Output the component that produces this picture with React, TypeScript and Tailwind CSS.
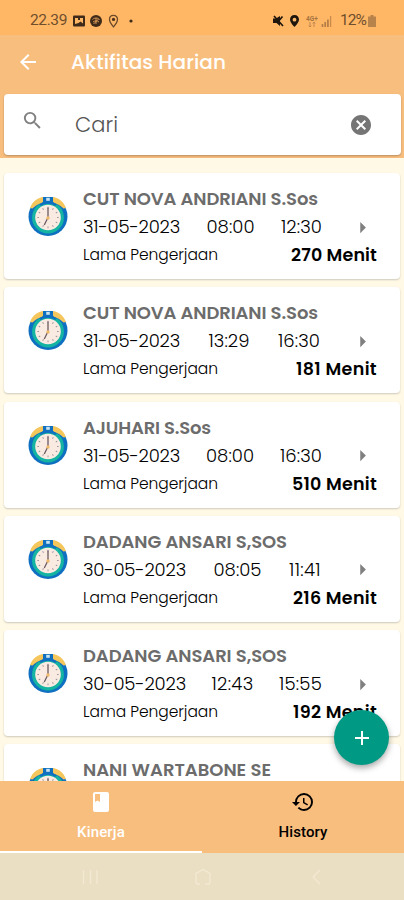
import { useState } from "react"
import {
  MdAdd,
  MdArrowBack,
  MdArrowRight,
  MdBook,
  MdCancel,
  MdHistory,
  MdSearch
} from "react-icons/md"

interface Session {
  date: string
  dateWidth: number
  start: string
  startWidth: number
  end: string
  endWidth: number
  rowWidth: number
  minutes: number
  totalWidth: number
}

interface Activity {
  id: number
  name: string
  nameWidth: number
  session?: Session
}

const activities: Activity[] = [
  {
    id: 1,
    name: "CUT NOVA ANDRIANI S.Sos",
    nameWidth: 235,
    session: { date: "31-05-2023", dateWidth: 97, start: "08:00", startWidth: 48, end: "12:30", endWidth: 41, rowWidth: 239, minutes: 270, totalWidth: 86 }
  },
  {
    id: 2,
    name: "CUT NOVA ANDRIANI S.Sos",
    nameWidth: 235,
    session: { date: "31-05-2023", dateWidth: 97, start: "13:29", startWidth: 41, end: "16:30", endWidth: 42, rowWidth: 237, minutes: 181, totalWidth: 81 }
  },
  {
    id: 3,
    name: "AJUHARI S.Sos",
    nameWidth: 128,
    session: { date: "31-05-2023", dateWidth: 97, start: "08:00", startWidth: 48, end: "16:30", endWidth: 42, rowWidth: 239, minutes: 510, totalWidth: 85 }
  },
  {
    id: 4,
    name: "DADANG ANSARI S,SOS",
    nameWidth: 204,
    session: { date: "30-05-2023", dateWidth: 103, start: "08:05", startWidth: 48, end: "11:41", endWidth: 32, rowWidth: 238, minutes: 216, totalWidth: 84 }
  },
  {
    id: 5,
    name: "DADANG ANSARI S,SOS",
    nameWidth: 204,
    session: { date: "30-05-2023", dateWidth: 103, start: "12:43", startWidth: 42, end: "15:55", endWidth: 43, rowWidth: 239, minutes: 192, totalWidth: 84 }
  },
  { id: 6, name: "NANI WARTABONE SE", nameWidth: 188 }
]

interface FitProps {
  text: string
  width: number
  className?: string
}

// Spreads the letters so that the text fills a fixed width
function Fit({ text, width, className }: FitProps) {
  const fit = (el: HTMLSpanElement | null) => {
    if (!el) return
    el.style.letterSpacing = "0px"
    const natural = el.getBoundingClientRect().width
    const step = (width - natural) / text.length
    el.style.letterSpacing = `${step}px`
  }

  return (
    <span ref={fit} className={`inline-block whitespace-nowrap ${className ?? ""}`}>
      {text}
    </span>
  )
}

function ClockIcon() {
  const ticks = [0, 30, 60, 90, 120, 150, 180, 210, 240, 270, 300, 330]
  return (
    <svg viewBox="0 0 40 40" className="h-10 w-10">
      <circle cx="20" cy="20.500" r="19.500" fill="#0f6fc0" />
      <circle cx="20" cy="21.500" r="16" fill="#14b3a2" />
      <path d="M2 12C4.500 5.500 9.500 1.500 16 1l-1 5.500C11 7.500 7.500 9.500 4.500 12.500zM38 12C35.500 5.500 30.500 1.500 24 1l1 5.500c4 1 7.500 3 10.500 6z" fill="#f5c65c" />
      <path d="M15 1h10v5l4 2.500-2 1.500C25 8.500 22.500 8 20 8s-5 .5-7 2l-2-1.500L15 6z" fill="#0f6fc0" />
      <rect x="18.200" y="1.800" width="3.600" height="3" fill="#c8e3ee" />
      <circle cx="20" cy="21.500" r="12.800" fill="#f9ebe2" />
      {ticks.map((angle) => (
        <path
          key={angle}
          d="M20 10.800v1.700"
          stroke="#9a9098"
          strokeWidth="0.900"
          transform={`rotate(${angle} 20 21.500)`}
        />
      ))}
      <path d="M20 21.500V12M20 21.500l-3.500 7" stroke="#6b5a62" strokeWidth="1.300" strokeLinecap="round" />
      <circle cx="20" cy="22" r="1.700" fill="#f3b96a" />
    </svg>
  )
}

function StatusBar() {
  return (
    <div className="flex h-[35px] shrink-0 items-center bg-[#ffb766] pt-[7px] pr-[28px] pl-[30px] font-['Roboto',sans-serif] text-[#6f4e2c]">
      <Fit text="22.39" width={37} className="text-[15.5px]" />
      <svg viewBox="0 0 62 14" className="ml-[5px] h-[14px] w-[62px]">
        <rect x="1" y="1.500" width="12" height="11" rx="1" fill="#3f2b19" />
        <path d="M3 4h3v2h2V4h3v5.500L8.500 7.500 6.500 9 3 10z" fill="#ffb766" />
        <circle cx="24" cy="7" r="6" fill="#3f2b19" />
        <path d="M20.500 5.500c2-2 5-2 7 0M21 8c2-1.500 4-1.500 6 0M24 4v6M21.500 10l5-5" fill="none" stroke="#e3a05b" strokeWidth="0.900" />
        <path d="M41.500 1.300c-2.400 0-4 1.700-4 4 0 3 4 7.600 4 7.600s4-4.600 4-7.600c0-2.300-1.600-4-4-4z" fill="none" stroke="#6b492a" strokeWidth="1.300" />
        <circle cx="41.500" cy="5.400" r="1.600" fill="#4b321c" />
        <circle cx="59" cy="7" r="1.600" fill="#3f2b19" />
      </svg>
      <div className="ml-auto flex items-center">
        <svg viewBox="0 0 61 14" className="h-[14px] w-[61px]">
          <path d="M0 4.500h3L7 2v10L3.500 9H0z" fill="#1f160d" />
          <path d="M1 2l9 10M6.500 6l3-3.500" stroke="#1f160d" strokeWidth="1.700" />
          <path d="M21.500 1c-2.700 0-4.500 2-4.500 4.500 0 3 4.500 7.500 4.500 7.500S26 8.500 26 5.500C26 3 24.200 1 21.500 1zm0 2.800a1.900 1.900 0 110 3.800 1.900 1.900 0 010-3.800z" fill="#1f160d" />
          <text x="33" y="6.500" fontSize="6.500" fontWeight="bold" fill="#a6743f">4G+</text>
          <path d="M37 13V8m-1.300 3.500L37 13l1.300-1.500M41 8v5m-1.300-3.500L41 8l1.300 1.500" stroke="#b9854c" strokeWidth="0.900" fill="none" />
          <path d="M49.500 10v3M52.200 8v5M54.900 5.500V13" stroke="#b37d45" strokeWidth="1.700" />
          <path d="M57.600 2v11" stroke="#c88b4c" strokeWidth="1.300" />
        </svg>
        <Fit text="12%" width={26} className="ml-[6px] text-[15.5px]" />
        <svg viewBox="0 0 8 12" className="ml-[2px] h-[12px] w-[8px]">
          <path d="M2.500 0h3v1.500H8V12H0V1.500h2.500z" fill="#b8834a" />
        </svg>
      </div>
    </div>
  )
}

function ActivityCard({ name, nameWidth, session }: Activity) {
  return (
    <div className="flex h-[106px] shrink-0 rounded-[4px] bg-white pt-[12px] pl-[24px] shadow-[0_1px_2px_rgba(0,0,0,0.2)]">
      <div className="mt-[11px] h-10 w-10 shrink-0">
        <ClockIcon />
      </div>
      <div className="ml-[15px] w-[294px] leading-7">
        <div className="h-7 text-[18px] font-semibold text-[#6c6c6c]">
          <Fit text={name} width={nameWidth} />
        </div>
        {session && (
          <>
            <div className="flex h-7 items-center text-[18px] font-light text-black">
              <div className="w-[239px]">
                <div className="flex justify-between" style={{ width: session.rowWidth }}>
                  <Fit text={session.date} width={session.dateWidth} />
                  <Fit text={session.start} width={session.startWidth} />
                  <Fit text={session.end} width={session.endWidth} />
                </div>
              </div>
              <MdArrowRight className="ml-[27px] h-[27px] w-[27px] text-[#808080]" />
            </div>
            <div className="flex h-7 items-center justify-between text-black">
              <Fit text="Lama Pengerjaan" width={135} className="text-[15.5px] font-light" />
              <Fit text={`${session.minutes} Menit`} width={session.totalWidth} className="text-[17.5px] font-semibold" />
            </div>
          </>
        )}
      </div>
    </div>
  )
}

export default function App() {
  const [tab, setTab] = useState("kinerja")

  return (
    <div className="relative flex h-[900px] w-[404px] flex-col overflow-hidden bg-[#fff9e6] font-['Poppins','Inter',sans-serif]">
      <StatusBar />

      <header className="h-[123px] shrink-0 bg-[#f8be7e] px-1">
        <div className="flex h-[54px] items-center pl-[12px] text-white">
          <MdArrowBack className="h-[24px] w-[24px]" />
          <Fit text="Aktifitas Harian" width={155} className="ml-[31px] text-[20px] font-medium" />
        </div>
        <div className="mt-[5px] flex h-[61px] w-[397px] items-center rounded-[4px] bg-white pr-[28px] pl-[17px] shadow-[0_1px_2px_rgba(0,0,0,0.25)]">
          <MdSearch className="-mt-[8px] h-[23px] w-[23px] text-[#808080]" />
          <Fit text="Cari" width={43} className="ml-[31px] text-[21px] font-light text-[#555]" />
          <MdCancel className="ml-auto h-[24px] w-[24px] text-[#757575]" />
        </div>
      </header>

      <main className="flex min-h-0 flex-1 flex-col gap-[8.2px] overflow-hidden px-1 pt-[15.3px]">
        {activities.map((item) => (
          <ActivityCard key={item.id} {...item} />
        ))}
      </main>

      <nav className="flex h-[72px] shrink-0 bg-[#f8be7e] font-['Roboto',sans-serif] text-[15px] font-medium">
        <button
          onClick={() => setTab("kinerja")}
          className={`flex flex-1 flex-col items-center border-b-2 pt-[9px] text-white ${tab === "kinerja" ? "border-white" : "border-transparent"}`}>
          <MdBook className="h-[24px] w-[24px]" />
          <Fit text="Kinerja" width={48} className="mt-[8px] leading-5" />
        </button>
        <button
          onClick={() => setTab("history")}
          className={`flex flex-1 flex-col items-center border-b-2 pt-[9px] text-black ${tab === "history" ? "border-white" : "border-transparent"}`}>
          <MdHistory className="h-[24px] w-[24px]" />
          <Fit text="History" width={49} className="mt-[8px] leading-5" />
        </button>
      </nav>

      <div className="h-[47px] shrink-0 bg-[#eadfc3]">
        <svg viewBox="0 0 404 47" className="h-[47px] w-[404px]" fill="none" stroke="#f3ead4" strokeWidth="1.300">
          <path d="M83.500 17v14M90.500 17v14M97 17v14" />
          <path d="M200 31h-2c-1.500 0-2-.8-2-2v-8.500l7-4 7 4V29c0 1.200-.5 2-2 2h-3" />
          <path d="M320 17l-7 7 7 7" />
        </svg>
      </div>

      <button className="absolute top-[710px] left-[334px] flex h-[55px] w-[55px] items-center justify-center rounded-full bg-[#009a84] text-white shadow-[0_3px_6px_rgba(0,0,0,0.35)]">
        <MdAdd className="h-[24px] w-[24px]" />
      </button>
    </div>
  )
}
